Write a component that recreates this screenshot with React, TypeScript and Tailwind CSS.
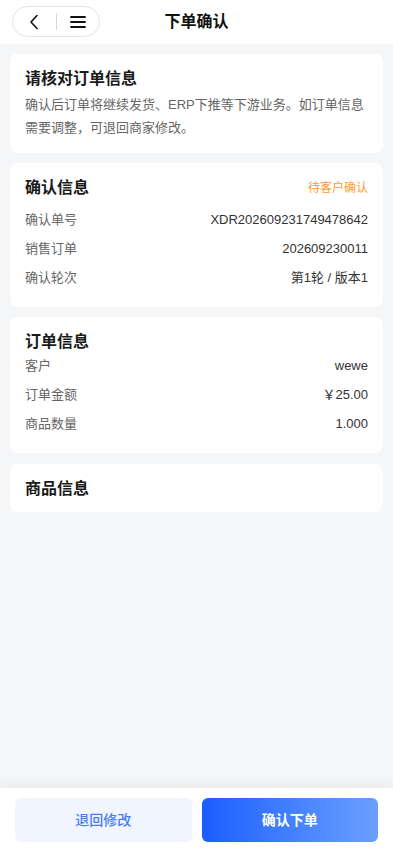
import React from 'react';

const font = { fontFamily: '"Liberation Sans", "Noto Sans CJK SC", sans-serif' };

function Row({ label, value }: { label: string; value: string }) {
  return (
    <div className="flex items-center justify-between text-[13px] leading-[20px]">
      <span className="text-[#666666]">{label}</span>
      <span className="text-[#333333]">{value}</span>
    </div>
  );
}

export default function App() {
  return (
    <div className="flex h-screen w-full flex-col bg-[#f5f6f8]" style={font}>
      {/* Header */}
      <div className="relative flex h-[44px] shrink-0 items-center justify-center bg-white">
        <div className="absolute left-[12px] top-[6px] flex h-[31px] w-[88px] items-center rounded-full border border-[#e3e3e3] bg-white">
          <div className="flex flex-1 items-center justify-center">
            <svg width="10" height="16" viewBox="0 0 10 16" fill="none">
              <path d="M8 1.5L2 8l6 6.5" stroke="#111" strokeWidth="1.6" strokeLinecap="round" strokeLinejoin="round" />
            </svg>
          </div>
          <div className="h-[17px] w-px bg-[#d8d8d8]" />
          <div className="flex flex-1 items-center justify-center">
            <svg width="16" height="14" viewBox="0 0 16 14" fill="none">
              <path d="M1 2h14M1 7h14M1 12h14" stroke="#111" strokeWidth="1.8" strokeLinecap="round" />
            </svg>
          </div>
        </div>
        <span className="text-[16px] font-bold text-[#111111]">下单确认</span>
      </div>

      {/* Content */}
      <div className="flex flex-1 flex-col gap-[10px] overflow-hidden px-[10px] pt-[10px]">
        <div className="rounded-[8px] bg-white px-[15px] pb-[14px] pt-[14px]">
          <div className="text-[16px] font-bold leading-[22px] text-[#1a1a1a]">请核对订单信息</div>
          <p className="mt-[3px] text-[13px] leading-[23px] text-[#666666]">
            确认后订单将继续发货、ERP下推等下游业务。如订单信息需要调整，可退回商家修改。
          </p>
        </div>

        <div className="rounded-[8px] bg-white px-[15px] pb-[19px] pt-[14px]">
          <div className="flex items-center justify-between">
            <span className="text-[16px] font-bold leading-[22px] text-[#1a1a1a]">确认信息</span>
            <span className="text-[12px] text-[#ff9a2e]">待客户确认</span>
          </div>
          <div className="mt-[11px] flex flex-col gap-[9px]">
            <Row label="确认单号" value="XDR202609231749478642" />
            <Row label="销售订单" value="202609230011" />
            <Row label="确认轮次" value="第1轮 / 版本1" />
          </div>
        </div>

        <div className="rounded-[8px] bg-white px-[15px] pb-[19px] pt-[14px]">
          <div className="text-[16px] font-bold leading-[22px] text-[#1a1a1a]">订单信息</div>
          <div className="mt-[3px] flex flex-col gap-[9px]">
            <Row label="客户" value="wewe" />
            <Row label="订单金额" value="￥25.00" />
            <Row label="商品数量" value="1.000" />
          </div>
        </div>

        <div className="mt-px rounded-[8px] bg-white px-[15px] pb-[12px] pt-[14px]">
          <div className="text-[16px] font-bold leading-[22px] text-[#1a1a1a]">商品信息</div>
        </div>
      </div>

      {/* Footer */}
      <div className="flex shrink-0 gap-[10px] bg-white px-[15px] py-[10px] shadow-[0_-6px_10px_rgba(0,0,0,0.04)]">
        <button className="flex h-[44px] flex-1 items-center justify-center rounded-[6px] bg-[#f0f5ff] text-[14px] font-medium text-[#4a7cf5]">
          退回修改
        </button>
        <button className="flex h-[44px] flex-1 items-center justify-center rounded-[6px] bg-gradient-to-r from-[#1a5cff] to-[#6b9fff] text-[14px] font-bold text-white">
          确认下单
        </button>
      </div>
    </div>
  );
}
